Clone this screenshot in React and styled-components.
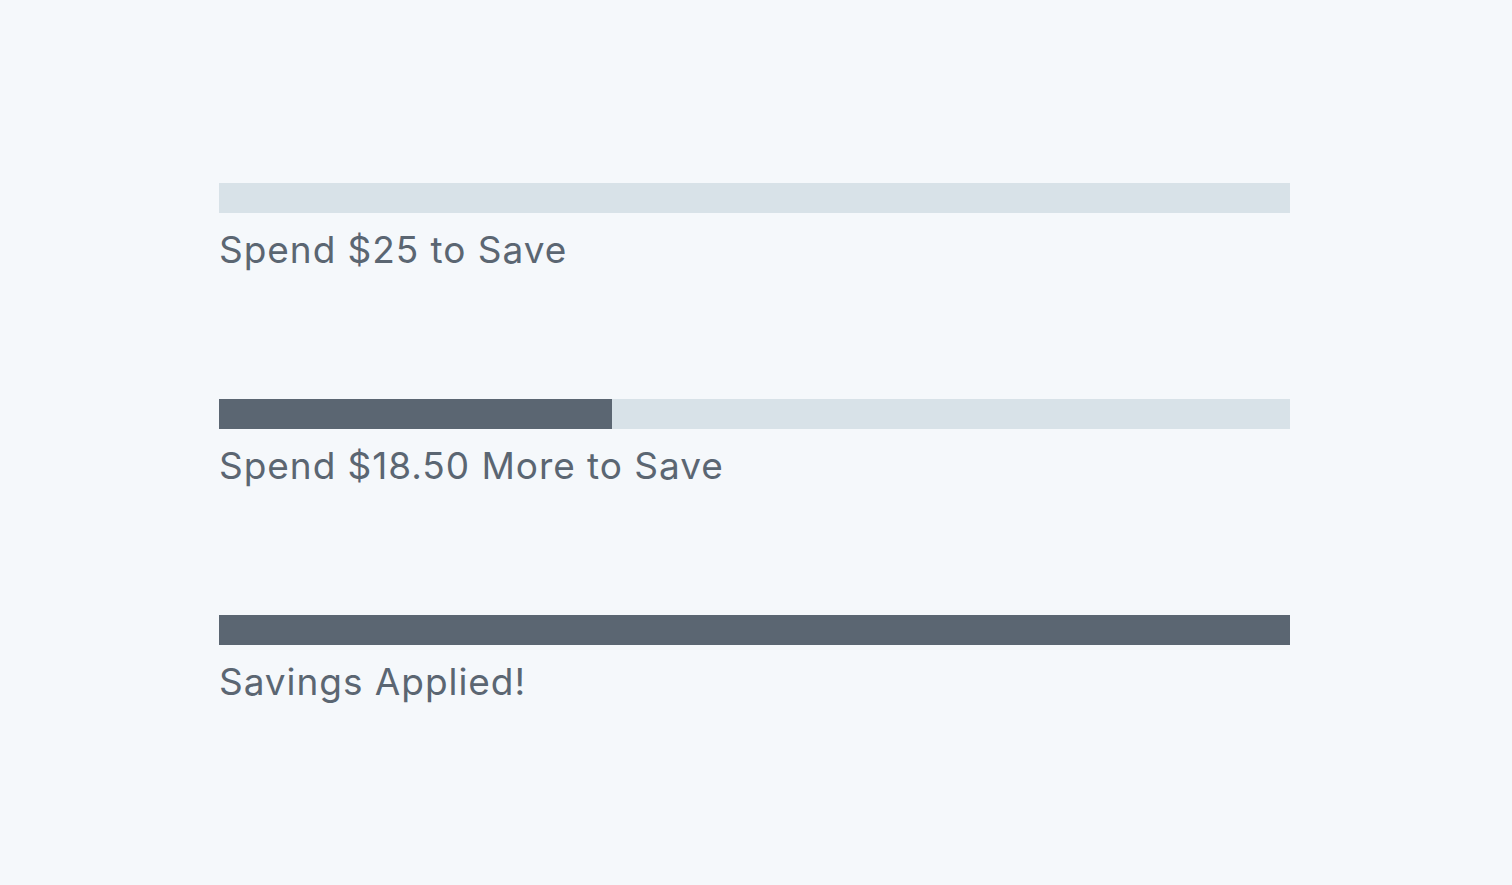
import React from 'react';
import styled, { createGlobalStyle } from 'styled-components';

const GlobalStyle = createGlobalStyle`
  html, body {
    margin: 0;
    padding: 0;
    background: #f5f8fb;
  }
  body {
    font-family: Inter, "Noto Sans", sans-serif;
  }
`;

const Page = styled.div`
  min-height: 885px;
  box-sizing: border-box;
  padding: 183px 222px 0 219px;
  display: flex;
  flex-direction: column;
  gap: 129px;
`;

const Item = styled.div`
  display: flex;
  flex-direction: column;
`;

const Track = styled.div`
  height: 30px;
  background: #d8e2e8;
  display: flex;
`;

const Fill = styled.div`
  height: 100%;
  background: #5b6672;
`;

const Label = styled.div`
  margin-top: 17px;
  font-size: 37px;
  line-height: 40px;
  color: #5b6672;
  letter-spacing: 0.95px;
`;

const items = [
  { pct: 0, label: 'Spend $25 to Save' },
  { pct: 36.7, label: 'Spend $18.50 More to Save' },
  { pct: 100, label: 'Savings Applied!' },
];

function App() {
  return (
    <>
      <GlobalStyle />
      <Page>
        {items.map((item) => (
          <Item key={item.label}>
            <Track>
              <Fill style={{ width: `${item.pct}%` }} />
            </Track>
            <Label>{item.label}</Label>
          </Item>
        ))}
      </Page>
    </>
  );
}

export default App;
